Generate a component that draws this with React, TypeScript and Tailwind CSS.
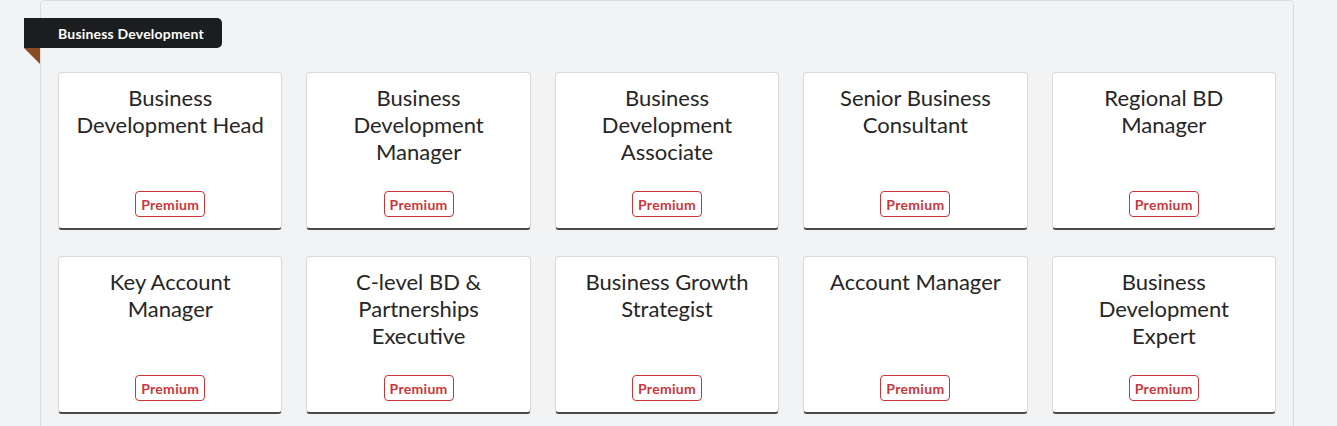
const roles = [
  "Business Development Head",
  "Business Development Manager",
  "Business Development Associate",
  "Senior Business Consultant",
  "Regional BD Manager",
  "Key Account Manager",
  "C-level BD & Partnerships Executive",
  "Business Growth Strategist",
  "Account Manager",
  "Business Development Expert",
];

const RoleCard = ({ title }: { title: string }) => (
  <div className="h-[158px] bg-white border border-[#d9d9d9] border-b-2 border-b-[#4a4a4a] rounded-[4px] flex flex-col items-center justify-between pt-[11px] pb-[11px] px-3">
    <h3 className="text-[22px] leading-[27px] text-[#262626] text-center font-normal">{title}</h3>
    <span className="h-[26px] w-[70px] flex items-center justify-center border border-[#c9373b] rounded-[4px] text-[14px] tracking-[0.3px] font-bold text-[#c9373b]">
      Premium
    </span>
  </div>
);

export default function App() {
  return (
    <div
      className="h-[426px] overflow-hidden bg-[#f3f4f6]"
      style={{ fontFamily: "Lato, 'Open Sans', sans-serif" }}
    >
      <div className="relative ml-[40px] w-[1254px] bg-[#f1f3f5] border border-[#dddddd] rounded-[4px] pt-[71px] px-[17px] pb-10">
        <div className="absolute left-[-17px] top-[17px]">
          <div className="h-[30px] w-[198px] bg-[#1c1d1f] rounded-r-[5px] flex items-center pl-[34px] text-[14px] tracking-[0.2px] font-bold text-white">
            Business Development
          </div>
          <svg width="16" height="16" viewBox="0 0 16 16" className="block">
            <polygon points="0,0 16,0 16,16" fill="#8a4a22" />
          </svg>
        </div>
        <div className="grid grid-cols-5 gap-x-[24px] gap-y-[26px]">
          {roles.map((r) => (
            <RoleCard key={r} title={r} />
          ))}
        </div>
      </div>
    </div>
  );
}
